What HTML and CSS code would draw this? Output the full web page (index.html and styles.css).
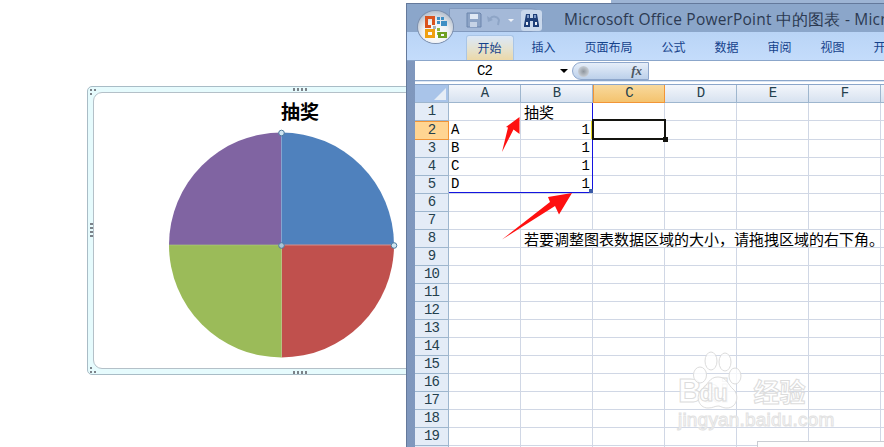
FILE: index.html
```html
<!DOCTYPE html>
<html lang="zh">
<head>
<meta charset="utf-8">
<title>Microsoft Office PowerPoint 中的图表</title>
<link rel="stylesheet" href="styles.css">
</head>
<body>
<div class="backwin"></div>

<section class="chart">
  <i class="dots dots-top"></i><i class="dots dots-bottom"></i><i class="dots-v"></i>
  <i class="corner corner-tl"></i><i class="corner corner-bl"></i>
  <div class="chart-inner">
    <h1 class="chart-title">抽奖</h1>
    <svg class="pie" width="236" height="232" viewBox="165 130 236 232">
      <path d="M281.5 246V133.5A112.5 112.5 0 0 1 394 246Z" fill="#4f81bd"/>
      <path d="M281.5 246H394A112.5 112.5 0 0 1 281.5 358.5Z" fill="#c0504d"/>
      <path d="M281.5 246V358.5A112.5 112.5 0 0 1 169 246Z" fill="#9bbb59"/>
      <path d="M281.5 246H169A112.5 112.5 0 0 1 281.5 133.5Z" fill="#8064a2"/>
      <path d="M281.5 134V246" stroke="#86a4cf" stroke-width="1"/>
      <path d="M281.5 246H394" stroke="#d58f8c" stroke-width="1"/>
      <path d="M281.5 246V358M169 246H281" stroke="#b4cc84" stroke-width=".6"/>
      <g fill="#cfe6f2" stroke="#4c7a9e" stroke-width="1">
        <circle cx="281.5" cy="134" r="2.8"/>
        <circle cx="281.5" cy="246.5" r="2.8" fill="#a9c4d8"/>
        <circle cx="394" cy="246.5" r="2.8"/>
      </g>
    </svg>
  </div>
</section>

<main class="excel">
  <header class="titlebar">
    <div class="qat">
      <svg class="qat-icon" width="16" height="16" viewBox="0 0 16 16"><path d="M1 1h13l1 1v13H1Z" fill="#8da4c6" stroke="#6d86ad"/><rect x="4" y="2" width="8" height="5" fill="#dfe8f4"/><rect x="4" y="10" width="7" height="5" fill="#c6d3e6"/></svg>
      <svg class="qat-icon" width="16" height="16" viewBox="0 0 16 16"><path d="M4 7a5 5 0 0 1 9 1l-1 5" fill="none" stroke="#8ea5c6" stroke-width="2"/><path d="M1 4l1 6 5-2Z" fill="#8ea5c6"/></svg>
      <span class="qat-drop"></span>
      <span class="qat-btn">
        <svg width="17" height="16" viewBox="0 0 17 16"><path d="M3 2h4v4h3V2h4l2 11v2h-6V9H7v6H1v-2Z" fill="#1f3f78"/><path d="M3 10h2v3H3ZM12 10h2v3h-2Z" fill="#e9eef6"/><path d="M4 3h2v3H4ZM11 3h2v3h-2Z" fill="#7f9bc8"/></svg>
      </span>
    </div>
    <span class="qat-more"></span>
    <span class="title-text">Microsoft Office PowerPoint 中的图表 - Microsoft Excel</span>
  </header>

  <div class="office-btn">
    <svg width="24" height="24" viewBox="0 0 24 24">
      <path d="M1 1h10v9H8V4H4v6h3v3H1Z" fill="#d9531e"/>
      <path d="M13 2h3v3h-3ZM17 2h3v3h-3ZM13 6h3v3h-3ZM17 6h6v5h-6Z" fill="#3f8fc4"/>
      <path d="M1 14h10v9H1Zm3 3v3h4v-3Z" fill="#f0a010"/>
      <path d="M13 13h3v3h-3ZM13 17h3v3h-3Z" fill="#8fb73e"/>
      <path d="M14 17h9v6h-9Zm3 2v2h3v-2Z" fill="#6fa01f"/>
      <path d="M9 11h3v3H9Z" fill="#a7b4c0"/>
    </svg>
  </div>

  <nav class="tabs">
    <span class="tab tab-active">开始</span>
    <span class="tab">插入</span>
    <span class="tab">页面布局</span>
    <span class="tab">公式</span>
    <span class="tab">数据</span>
    <span class="tab">审阅</span>
    <span class="tab">视图</span>
    <span class="tab">开发工具</span>
  </nav>

  <div class="formula">
    <div class="namebox"><span class="name-text">C2</span><span class="name-arrow"></span></div>
    <div class="fx-pill"><span class="fx-knob"></span><span class="fx">fx</span></div>
    <div class="formula-input"></div>
  </div>
  <div class="formula-gap"></div>

  <div class="sheet">
    <table class="grid">
      <tr class="head"><th class="corner-cell"><i class="tri"></i></th><th>A</th><th>B</th><th class="col-on">C</th><th>D</th><th>E</th><th>F</th><th>G</th></tr>
      <tr><th>1</th><td></td><td class="zh">抽奖</td><td></td><td></td><td></td><td></td><td></td></tr>
      <tr><th class="row-on">2</th><td>A</td><td class="num">1</td><td></td><td></td><td></td><td></td><td></td></tr>
      <tr><th>3</th><td>B</td><td class="num">1</td><td></td><td></td><td></td><td></td><td></td></tr>
      <tr><th>4</th><td>C</td><td class="num">1</td><td></td><td></td><td></td><td></td><td></td></tr>
      <tr><th>5</th><td>D</td><td class="num">1</td><td></td><td></td><td></td><td></td><td></td></tr>
      <tr><th>6</th><td></td><td></td><td></td><td></td><td></td><td></td><td></td></tr>
      <tr><th>7</th><td></td><td></td><td></td><td></td><td></td><td></td><td></td></tr>
      <tr><th>8</th><td></td><td class="zh" colspan="5">若要调整图表数据区域的大小，请拖拽区域的右下角。</td><td></td></tr>
      <tr><th>9</th><td></td><td></td><td></td><td></td><td></td><td></td><td></td></tr>
      <tr><th>10</th><td></td><td></td><td></td><td></td><td></td><td></td><td></td></tr>
      <tr><th>11</th><td></td><td></td><td></td><td></td><td></td><td></td><td></td></tr>
      <tr><th>12</th><td></td><td></td><td></td><td></td><td></td><td></td><td></td></tr>
      <tr><th>13</th><td></td><td></td><td></td><td></td><td></td><td></td><td></td></tr>
      <tr><th>14</th><td></td><td></td><td></td><td></td><td></td><td></td><td></td></tr>
      <tr><th>15</th><td></td><td></td><td></td><td></td><td></td><td></td><td></td></tr>
      <tr><th>16</th><td></td><td></td><td></td><td></td><td></td><td></td><td></td></tr>
      <tr><th>17</th><td></td><td></td><td></td><td></td><td></td><td></td><td></td></tr>
      <tr><th>18</th><td></td><td></td><td></td><td></td><td></td><td></td><td></td></tr>
      <tr><th>19</th><td></td><td></td><td></td><td></td><td></td><td></td><td></td></tr>
      <tr><th></th><td></td><td></td><td></td><td></td><td></td><td></td><td></td></tr>
    </table>
    <div class="range"><i class="range-handle"></i></div>
    <div class="active-cell"><i class="active-handle"></i></div>
    <i class="active-edge"></i>
  </div>
</main>

<svg class="arrows" width="884" height="447" viewBox="0 0 884 447">
  <path d="M519.5 117V134L513.5 129.500L502 152L508 127.500L506 127Z" fill="#fe1010"/>
  <path d="M572 193L559 214.500L555 206L502 239.500L550 202L548 197Z" fill="#fe1010"/>
</svg>

<div class="watermark">
  <div class="wm-main"><span>Bai</span><svg class="paw" width="50" height="62" viewBox="0 0 50 62"><g fill="#fff" fill-opacity=".75" stroke="#dcdcdc"><ellipse cx="7" cy="25" rx="6.500" ry="8"/><ellipse cx="18" cy="11" rx="6" ry="9"/><ellipse cx="32" cy="12" rx="6" ry="9"/><ellipse cx="42" cy="26" rx="6" ry="8"/><path d="M25 27c9 0 10 8 15 12 7 6 4 19-6 19-5 0-6-2-9-2s-5 2-10 2C5 58 2 45 9 39c6-4 7-12 16-12Z"/></g></svg><span class="wm-du">du</span><span class="wm-zh">经验</span></div>
  <div class="wm-url">jingyan.baidu.com</div>
</div>
<div class="corner-patch"></div>
</body>
</html>
```
FILE: styles.css
```css
* { box-sizing: border-box; }
html, body { margin: 0; padding: 0; }
body {
  position: relative;
  width: 884px;
  height: 447px;
  overflow: hidden;
  background: #fff;
  font-family: "Liberation Mono", "Noto Sans CJK SC", monospace;
}

.backwin {
  position: absolute;
  left: 611px;
  right: 0;
  top: 0;
  height: 4px;
  background: #9db4d4;
}

/* chart object */
.chart {
  position: absolute;
  left: 87px;
  top: 86px;
  width: 426px;
  height: 289px;
  padding: 5px;
  border: 1px solid #a9bcc6;
  border-radius: 5px;
  background: #e6fbfd;
}
.chart-inner {
  height: 100%;
  border: 1px solid #b4c0c8;
  border-radius: 9px;
  background: #fff;
  display: flex;
  flex-direction: column;
}
.chart-title {
  margin: 5px 0 0;
  height: 28px;
  font: bold 19px/26px "Noto Sans CJK SC", sans-serif;
  color: #000;
  text-align: center;
}
.pie { display: block; margin: 3px 0 0 71px; }
.dots, .dots-v, .corner { position: absolute; }
.dots {
  left: 205px;
  width: 14px;
  height: 3px;
  background: repeating-linear-gradient(90deg, #7b8289 0 2px, transparent 2px 4px);
}
.dots-top { top: 1px; }
.dots-bottom { bottom: 0; }
.dots-v {
  left: 2px;
  top: 136px;
  width: 3px;
  height: 15px;
  background: repeating-linear-gradient(180deg, #7b8289 0 2px, transparent 2px 4px);
}
.corner {
  left: 2px;
  width: 7px;
  height: 6px;
  background:
    repeating-linear-gradient(90deg, #7b8289 0 2px, transparent 2px 4px) 0 0 / 7px 2px no-repeat,
    repeating-linear-gradient(90deg, #7b8289 0 2px, transparent 2px 4px) 0 4px / 3px 2px no-repeat;
}
.corner-tl { top: 2px; }
.corner-bl {
  bottom: 1px;
  background:
    repeating-linear-gradient(90deg, #7b8289 0 2px, transparent 2px 4px) 0 0 / 3px 2px no-repeat,
    repeating-linear-gradient(90deg, #7b8289 0 2px, transparent 2px 4px) 0 4px / 7px 2px no-repeat;
}

/* excel window */
.excel {
  position: absolute;
  left: 406px;
  top: 3px;
  width: 478px;
  height: 444px;
  overflow: hidden;
  padding-left: 8px;
  border-top: 1px solid #64799b;
  border-left: 1px solid #64799b;
  background: linear-gradient(90deg, #7f97bd, #9ab1d3);
  display: flex;
  flex-direction: column;
}
.titlebar {
  flex: none;
  height: 28px;
  margin-left: -8px;
  padding: 4px 0 0 42px;
  display: flex;
  align-items: flex-start;
  background: #8ba6ca;
  white-space: nowrap;
}
.qat {
  width: 97px;
  height: 24px;
  padding-left: 16px;
  display: flex;
  align-items: center;
  gap: 4px;
  background: #a4b9d8;
  border: 1px solid #8199bd;
  border-radius: 0 12px 12px 0;
}
.qat-icon { flex: none; }
.qat-drop {
  margin-left: 2px;
  width: 0;
  height: 0;
  border: 3px solid transparent;
  border-top: 3px solid #eef2f8;
  border-bottom: 0;
}
.qat-btn {
  margin-left: 3px;
  width: 21px;
  height: 21px;
  display: flex;
  align-items: center;
  justify-content: center;
  background: #c9d8ec;
  border-radius: 3px;
}
.qat-more {
  margin: 8px 0 0 7px;
  width: 7px;
  height: 7px;
  border-top: 1px solid #1f3f78;
  border-bottom: 4px solid #1f3f78;
  clip-path: polygon(0 0, 100% 0, 100% 30%, 50% 100%, 0 30%);
}
.title-text {
  margin: -1px 0 0 14px;
  font: 15.5px/24px "Open Sans", sans-serif;
  color: #2c3a52;
  letter-spacing: .2px;
}
.office-btn {
  position: absolute;
  left: 11px;
  top: 7px;
  width: 35px;
  height: 32px;
  border-radius: 50%;
  display: flex;
  align-items: center;
  justify-content: center;
  background: radial-gradient(circle at 50% 70%, #fff 0, #eef0f2 45%, #aab6c6 85%, #8b98ad 100%);
  box-shadow: 0 0 0 1px #7e90ad;
}
.office-btn svg { width: 24px; height: 24px; }

.tabs {
  flex: none;
  height: 29px;
  margin-left: -8px;
  padding: 3px 0 0 55px;
  display: flex;
  background: linear-gradient(180deg, #b9d4f6, #c4dcfb);
  border-bottom: 1px solid #8ba6ca;
  white-space: nowrap;
}
.tab {
  flex: none;
  padding: 0 14.500px;
  font: 12px/24px "Noto Sans CJK SC", sans-serif;
  color: #15428b;
}
.tab-active {
  margin: 0 3.500px;
  padding: 0 11px;
  color: #15428b;
  background: linear-gradient(180deg, #dbe8f9 0, #e5e2cf 55%, #ecd8a8 100%);
  border: 1px solid #a9c5e6;
  border-bottom: 0;
  border-radius: 3px 3px 0 0;
}

.formula {
  flex: none;
  height: 20px;
  display: flex;
  background: #fff;
  border-bottom: 1px solid #8ba6ca;
}
.namebox {
  position: relative;
  width: 157px;
  display: flex;
  align-items: center;
}
.name-text {
  margin-left: 62px;
  font-size: 14px;
  letter-spacing: -.9px;
  color: #000;
}
.name-arrow {
  position: absolute;
  right: 4px;
  top: 8px;
  border: 4px solid transparent;
  border-top: 4px solid #000;
  border-bottom: 0;
}
.fx-pill {
  position: relative;
  width: 77px;
  margin-top: 1px;
  border: 1px solid #8ea7cc;
  border-radius: 10px 0 0 10px;
  background: linear-gradient(180deg, #e6eef9, #bcd0ea);
}
.fx-knob {
  position: absolute;
  left: 5px;
  top: 3px;
  width: 11px;
  height: 11px;
  border-radius: 50%;
  background: radial-gradient(circle, #8f969e, #dfe5ed);
}
.fx {
  position: absolute;
  right: 6px;
  top: 0;
  font: italic bold 13px/16px "Liberation Serif", serif;
  color: #4c5560;
}
.formula-input { flex: 1; background: #fff; }
.formula-gap {
  flex: none;
  height: 4px;
  background: #fff;
  border-top: 1px solid #dce7f5;
  border-bottom: 1px solid #8ba6ca;
}

.sheet {
  position: relative;
  flex: 1;
  background: #fff;
  overflow: hidden;
}
.grid {
  width: 538px;
  table-layout: fixed;
  border-collapse: separate;
  border-spacing: 0;
}
.grid th, .grid td {
  width: 72px;
  height: 18px;
  padding: 0;
  overflow: visible;
  white-space: nowrap;
  font-size: 14px;
  font-weight: 400;
  line-height: 17px;
  letter-spacing: -.9px;
}
.grid td {
  padding-left: 2px;
  color: #000;
  border-right: 1px solid #d0d7e5;
  border-bottom: 1px solid #d0d7e5;
}
.grid th {
  color: #24404d;
  background: #e4ecf7;
  border-right: 1px solid #9eb6ce;
  border-bottom: 1px solid #9eb6ce;
}
.grid tr > th:first-child { width: 34px; }
.grid .head th {
  background: linear-gradient(180deg, #f3f6fb, #d7e2f0);
  color: #24404d;
}
.grid .head .corner-cell {
  position: relative;
  background: #a9c4e9;
}
.tri {
  position: absolute;
  right: 2px;
  bottom: 2px;
  width: 12px;
  height: 12px;
  background: #e6edf6;
  clip-path: polygon(100% 0, 100% 100%, 0 100%);
}
.grid .head .col-on {
  background: linear-gradient(180deg, #f8d99d, #f4c36e);
  border-right: 1px solid #f29536;
  border-left: 1px solid #f29536;
  border-bottom: 1px solid #f29536;
}
.grid .row-on {
  background: #ffd592;
  border-right: 1px solid #f29536;
  border-top: 1px solid #f29536;
  border-bottom: 1px solid #f29536;
}
.grid .zh {
  padding-left: 3px;
  font: 15px/17px "Noto Sans CJK SC", sans-serif;
  letter-spacing: 0;
}
.grid .num {
  padding: 0 3px 0 0;
  text-align: right;
}

.range {
  position: absolute;
  left: 34px;
  top: 18px;
  width: 144px;
  height: 90px;
  border-right: 1px solid #1414e0;
  border-bottom: 1px solid #1414e0;
}
.range-handle {
  position: absolute;
  right: -1px;
  bottom: -1px;
  width: 4px;
  height: 4px;
  background: #3a5aa8;
}
.active-cell {
  position: absolute;
  left: 177px;
  top: 34px;
  width: 74px;
  height: 21px;
  border: 2px solid #14140f;
}
.active-handle {
  position: absolute;
  right: -4px;
  bottom: -4px;
  width: 5px;
  height: 5px;
  background: #14140f;
}
.active-edge {
  position: absolute;
  left: 176px;
  top: 36px;
  width: 1px;
  height: 18px;
  background: #e8d820;
}

.arrows {
  position: absolute;
  left: 0;
  top: 0;
  pointer-events: none;
}

.watermark {
  position: absolute;
  left: 678px;
  top: 350px;
  width: 160px;
  color: rgba(255, 255, 255, .75);
  font-family: "Liberation Sans", sans-serif;
}
.wm-main {
  height: 60px;
  display: flex;
  align-items: flex-end;
  font-size: 33px;
  font-weight: 700;
  line-height: 38px;
  -webkit-text-stroke: 1px #dcdcdc;
}
.paw { flex: none; margin: 0 -2px 0 -36px; position: relative; top: 2px; }
.wm-main > span:first-child { flex: none; }
.wm-du {
  flex: none;
  margin: 0 4px 2px -42px;
  position: relative;
  font-size: 23px;
  line-height: 30px;
}
.wm-zh {
  flex: none;
  margin-left: 22px;
  font: bold 26px/38px "Noto Sans CJK SC", sans-serif;
}
.wm-url {
  margin-top: 0;
  font-size: 19px;
  line-height: 20px;
  letter-spacing: .2px;
  -webkit-text-stroke: 1px #e2e2e2;
  white-space: nowrap;
}
.corner-patch {
  position: absolute;
  left: 757px;
  right: 0;
  top: 441px;
  bottom: 0;
  background: #fdfdfd;
  border-top: 1px solid #c9ccd2;
  border-left: 1px solid #c9ccd2;
}
```
